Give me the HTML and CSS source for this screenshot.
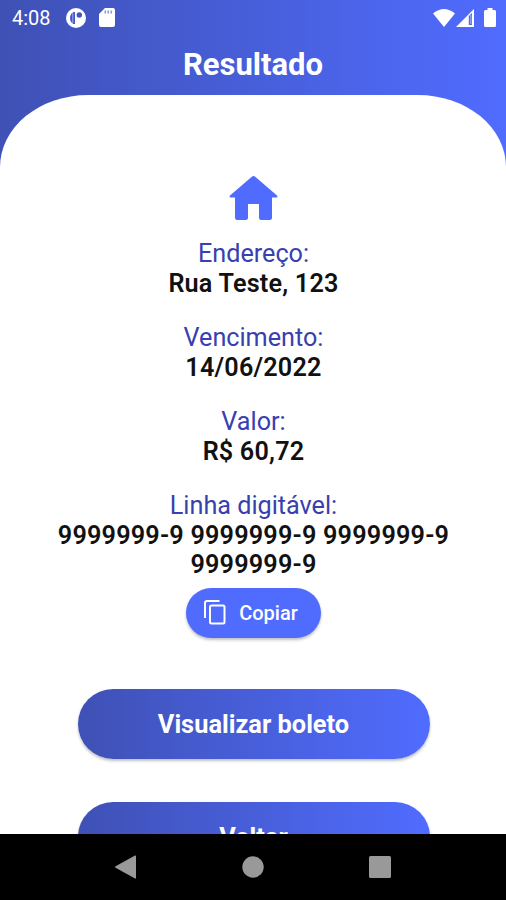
FILE: index.html
```
<!DOCTYPE html>
<html lang="pt-BR">
<head>
  <meta charset="UTF-8">
  <title>Resultado</title>
  <meta name="viewport" content="width=device-width, initial-scale=1.0">
  <link rel="stylesheet" href="styles.css">
</head>
<body>
  <div class="app">
    <!-- barra de status -->
    <div class="status-bar">
      <span class="clock">4:08</span>
      <svg class="icon-app" width="20" height="20" viewBox="0 0 20 20">
        <circle cx="10" cy="10" r="10" fill="#fff"/>
        <path d="M9 4v12H7.500Q4 14 4 10t3.500-6z" fill="#4256c2"/>
        <path d="M6.800 5v10" stroke="#a5afe2" stroke-width="1"/>
        <circle cx="13.300" cy="7" r="2.700" fill="#4256c2"/>
      </svg>
      <svg class="icon-sd" width="16" height="19" viewBox="0 0 16 19">
        <path d="M6 0h8a2 2 0 0 1 2 2v15a2 2 0 0 1-2 2H2a2 2 0 0 1-2-2V6z" fill="#fff"/>
        <path d="M6.3 2.5v3M9.3 2.5v3M12.3 2.5v3" stroke="#8793da" stroke-width="1.5"/>
      </svg>
      <div class="status-right">
        <svg width="22" height="18" viewBox="0 0 22 18">
          <path d="M0 4.5Q11-4.5 22 4.5L11 18z" fill="#fff"/>
        </svg>
        <svg class="icon-signal" width="18" height="18" viewBox="0 0 18 18">
          <path d="M18 0v18H0z" fill="#fff"/>
          <path d="M12.800 7l3.200-3V16h-3.200z" fill="#5068ef"/>
          <path d="M14.800 6v9" stroke="#a9b5f8" stroke-width="1"/>
        </svg>
        <svg class="icon-battery" width="12" height="19" viewBox="0 0 12 19">
          <path d="M3.5 0h5v2H10.500a1.500 1.500 0 0 1 1.500 1.500v14a1.500 1.500 0 0 1-1.500 1.500h-9A1.500 1.500 0 0 1 0 17.500v-14A1.500 1.500 0 0 1 1.500 2h2z" fill="#fff"/>
        </svg>
      </div>
    </div>

    <h1>Resultado</h1>

    <div class="sheet">
      <svg class="home" width="49" height="44" viewBox="0 0 49 44">
        <path d="M22.800.8q1.700-1.500 3.400 0L48 19.600q1.200 1.700-.8 1.900H43V41.500Q43 44 40.500 44H32.500Q30 44 30 41.500V28H19V41.500Q19 44 16.500 44H8.500Q6 44 6 41.500V21.500H1.800q-2-.2-.8-1.900z" fill="#506cff"/>
      </svg>

      <dl class="details">
        <dt>Endereço:</dt>
        <dd>Rua Teste, 123</dd>
        <dt>Vencimento:</dt>
        <dd>14/06/2022</dd>
        <dt>Valor:</dt>
        <dd>R$ 60,72</dd>
        <dt>Linha digitável:</dt>
        <dd>9999999-9 9999999-9 9999999-9 9999999-9</dd>
      </dl>

      <button class="copy">
        <svg width="22" height="25" viewBox="0 0 22 25" fill="none" stroke="#fff" stroke-width="2">
          <path d="M1 18V3a2 2 0 0 1 2-2h12.500"/>
          <rect x="6" y="5.500" width="14.500" height="18" rx="1.500"/>
        </svg>
        <span>Copiar</span>
      </button>

      <button class="action">Visualizar boleto</button>
      <button class="action">Voltar</button>
    </div>

    <!-- navegação do sistema -->
    <div class="nav-bar">
      <svg width="21" height="24" viewBox="0 0 21 24"><path d="M20 .5q1-.4 1 .8v21.400q0 1.200-1 .8L.6 12.800q-1.200-.8 0-1.600z" fill="#999"/></svg>
      <svg width="22" height="22" viewBox="0 0 22 22"><circle cx="11" cy="11" r="10.700" fill="#999"/></svg>
      <svg width="22" height="22" viewBox="0 0 22 22"><rect width="22" height="22" rx="1.500" fill="#999"/></svg>
    </div>
  </div>
</body>
</html>
```
FILE: styles.css
```
* {
  box-sizing: border-box;
}
body {
  margin: 0;
  font-family: Roboto, sans-serif;
}
.app {
  display: flex;
  flex-direction: column;
  height: 900px;
  overflow: hidden;
  background: linear-gradient(to right, #3f51b5, #506cff);
}

/* barra de status */
.status-bar {
  display: flex;
  align-items: center;
  flex-shrink: 0;
  height: 35px;
  padding: 0 10px 0 12px;
  color: #fff;
}
.clock {
  width: 54px;
  font-size: 20px;
}
.icon-sd {
  margin-left: 13px;
}
.status-right {
  display: flex;
  align-items: center;
  margin-left: auto;
}
.icon-signal {
  margin-left: 1px;
}
.icon-battery {
  margin-left: 10px;
}

h1 {
  flex-shrink: 0;
  height: 60px;
  margin: 0;
  font-size: 31px;
  font-weight: 700;
  line-height: 59px;
  text-align: center;
  color: #fff;
}

/* folha branca com os cantos arredondados */
.sheet {
  flex: 1;
  min-height: 0;
  display: flex;
  flex-direction: column;
  align-items: center;
  overflow: hidden;
  padding: 81px 0 0 1px;
  background-color: #fff;
  border-radius: 88px 88px 0 0 / 72px 72px 0 0;
}
.home {
  flex-shrink: 0;
}
.details {
  width: 410px;
  margin: 19px 0 8px;
  font-size: 25.2px;
  line-height: 29.5px;
  text-align: center;
}
.details dt {
  color: #3840b0;
}
.details dd {
  margin: 0 0 25px;
  font-weight: 600;
  letter-spacing: 0.2px;
  color: #111;
}
.details dd:last-child {
  margin-bottom: 0;
}

button {
  flex-shrink: 0;
  border: 0;
  padding: 0;
  font-family: inherit;
  color: #fff;
}
.copy {
  display: flex;
  align-items: center;
  justify-content: center;
  gap: 13px;
  width: 135px;
  height: 50px;
  margin-bottom: 51px;
  padding-right: 5px;
  border-radius: 25px;
  background-color: #506cff;
  box-shadow: 0 2px 3px rgba(0, 0, 0, 0.25);
  font-size: 20px;
  font-weight: 500;
}
.action {
  width: 352px;
  height: 70px;
  margin-bottom: 43px;
  padding-top: 1px;
  border-radius: 37px;
  background: linear-gradient(to right, #3f51b5, #506cff);
  box-shadow: 0 2px 3px rgba(0, 0, 0, 0.25);
  font-size: 25.4px;
  font-weight: 700;
}

/* navegação do sistema */
.nav-bar {
  display: flex;
  align-items: center;
  justify-content: space-between;
  flex-shrink: 0;
  height: 66px;
  padding: 0 115px;
  background-color: #000;
}
```
